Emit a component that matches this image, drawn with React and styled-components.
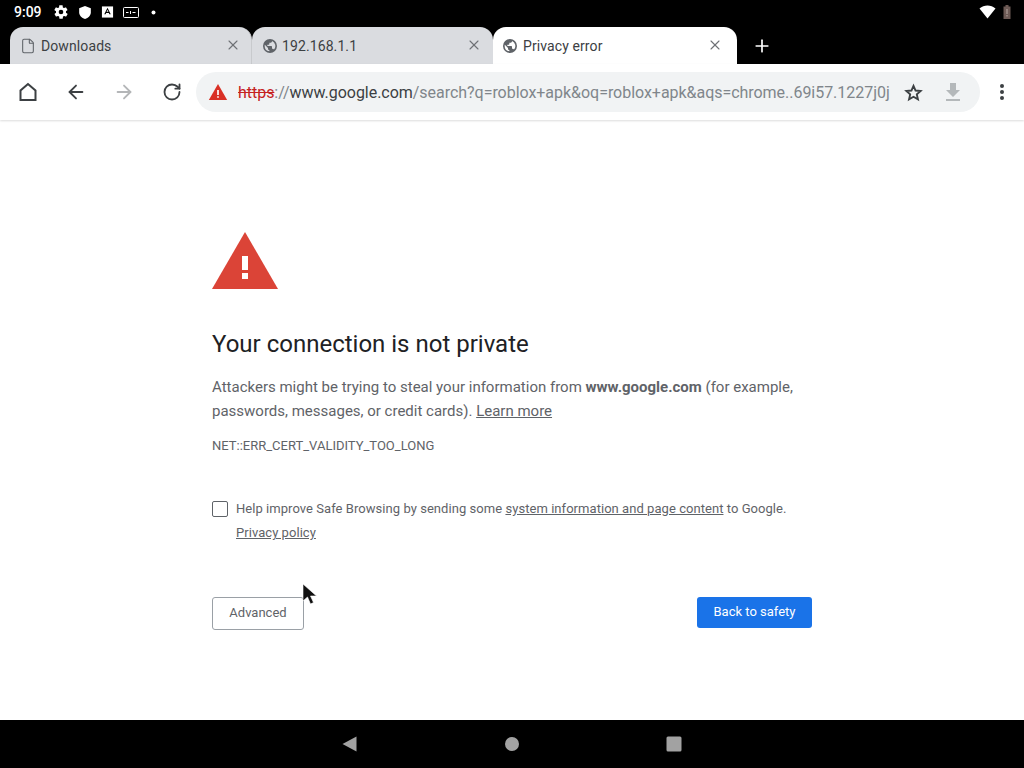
import React from 'react'
import styled, { createGlobalStyle } from 'styled-components'
import { ArrowLeft, ArrowRight, RotateCw, X, Plus, File } from 'lucide-react'

const GlobalStyle = createGlobalStyle`
  html, body { margin: 0; padding: 0; background: #000; }
  body { font-family: Roboto, "Liberation Sans", sans-serif; }
`

const Screen = styled.div`
  position: relative;
  width: 1024px;
  height: 768px;
  display: flex;
  flex-direction: column;
  overflow: hidden;
  background: #fff;
`
const StatusBar = styled.div`
  height: 27px;
  background: #000;
  color: #fff;
  display: flex;
  align-items: center;
  padding: 0 13px 3px 14px;
  box-sizing: border-box;
  font-size: 14px;
  font-weight: 500;
`
const StatusIcons = styled.div`
  display: flex;
  align-items: center;
  gap: 9px;
  margin-left: 11px;
  flex: 1;
`
const StatusDot = styled.svg`
  margin-left: 3px;
`
const Wifi = styled.svg`
  margin-right: 7px;
`
const TabStrip = styled.div`
  height: 37px;
  background: #000;
  display: flex;
  padding-left: 10px;
  align-items: stretch;
`
const Tab = styled.div`
  width: ${p => p.$width}px;
  box-sizing: border-box;
  background: ${p => (p.$active ? '#fff' : '#dadce0')};
  border-radius: 13px 13px 0 0;
  display: flex;
  align-items: center;
  padding: 0 ${p => p.$right}px 0 ${p => p.$left}px;
  gap: ${p => p.$gap}px;
  font-size: 14px;
  letter-spacing: 0.1px;
  color: #3c4043;
  border-right: ${p => (p.$divider ? '1px solid #c8cacd' : 'none')};
  span { flex: 1; white-space: nowrap; }
`
const TabClose = styled(X)`
  width: 16px;
  height: 16px;
  color: #6e7175;
  margin-top: -2px;
`
const GlobeIcon = styled.svg`
  flex: none;
`
const NewTab = styled.div`
  width: 50px;
  display: flex;
  align-items: center;
  justify-content: center;
  color: #fff;
`
const Toolbar = styled.div`
  height: 56px;
  background: #fff;
  display: flex;
  align-items: center;
  box-shadow: 0 1px 2px rgba(0, 0, 0, 0.14);
  position: relative;
  z-index: 1;
  box-sizing: border-box;
  padding-left: 16px;
`
const ToolButton = styled.div`
  width: 24px;
  height: 24px;
  margin-right: ${p => p.$gap}px;
  display: flex;
  align-items: center;
  justify-content: center;
  color: ${p => p.$color || '#3c4043'};
`
const Omnibox = styled.div`
  width: 784px;
  height: 40px;
  margin-left: 12px;
  border-radius: 20px;
  background: #f1f3f4;
  display: flex;
  align-items: center;
  padding: 0 18px 0 12px;
  box-sizing: border-box;
  font-size: 16px;
`
const Url = styled.div`
  flex: 1;
  min-width: 0;
  margin-left: 10px;
  white-space: nowrap;
  letter-spacing: -0.035px;
  color: #80868b;
`
const Scheme = styled.span`
  color: #c5221f;
  text-decoration: line-through;
`
const Host = styled.span`
  color: #3c4043;
`
const OmniIcon = styled.div`
  display: flex;
  flex: none;
  margin-left: ${p => p.$left}px;
`
const Menu = styled.div`
  margin-left: 10px;
  display: flex;
  flex-direction: column;
  gap: 2px;
  width: 24px;
  align-items: center;
  i { width: 4px; height: 4px; border-radius: 50%; background: #3c4043; }
`
const Page = styled.main`
  flex: 1;
  padding: 112px 0 0 212px;
  color: #5f6368;
  font-size: 15px;
`
const Content = styled.div`
  width: 600px;
`
const ErrorIcon = styled.svg`
  display: block;
`
const Title = styled.h1`
  margin: 39px 0 16px;
  font-size: 24px;
  font-weight: 400;
  line-height: 30px;
  color: #202124;
`
const Paragraph = styled.p`
  margin: 0;
  line-height: 24px;
  b { font-weight: 700; }
  a { color: #5f6368; text-decoration: underline; }
`
const ErrorCode = styled.div`
  margin-top: 15px;
  font-size: 13px;
  line-height: 16px;
  text-transform: uppercase;
`
const OptIn = styled.div`
  margin-top: 43px;
  display: flex;
  font-size: 13px;
  letter-spacing: 0.05px;
  line-height: 24px;
  a { color: #5f6368; text-decoration: underline; }
`
const Checkbox = styled.div`
  width: 14px;
  height: 14px;
  border: 1px solid #5f6368;
  border-radius: 2px;
  margin: 4px 8px 0 0;
  flex: none;
`
const Actions = styled.div`
  margin-top: 52px;
  display: flex;
  justify-content: space-between;
  align-items: flex-start;
`
const Button = styled.div`
  height: ${p => (p.$primary ? 31 : 33)}px;
  width: ${p => (p.$primary ? 115 : 92)}px;
  box-sizing: border-box;
  padding-bottom: 2px;
  border-radius: 3px;
  display: flex;
  align-items: center;
  justify-content: center;
  font-size: 13px;
  background: ${p => (p.$primary ? '#1a73e8' : '#fff')};
  color: ${p => (p.$primary ? '#fff' : '#5f6368')};
  border: ${p => (p.$primary ? 'none' : '1px solid #9aa0a6')};
`
const NavBar = styled.div`
  height: 48px;
  background: #000;
  display: flex;
  align-items: center;
  justify-content: center;
  gap: 146px;
`
const Cursor = styled.svg`
  position: absolute;
  left: 302px;
  top: 583px;
`

const Globe = () => (
  <GlobeIcon width="16" height="16" viewBox="0 0 24 24" fill="#5f6368">
    <path d="M12 1.5a10.5 10.5 0 1 0 0 21 10.5 10.5 0 0 0 0-21zM4 12c0-.7.1-1.300.3-1.900L9 15v1c0 1.100.9 2 2 2v2a8 8 0 0 1-7-8zm13.900 5.400c-.3-.8-1-1.400-1.900-1.400h-1v-3c0-.6-.4-1-1-1H8v-2h2c.6 0 1-.4 1-1V7h2c1.100 0 2-.9 2-2v-.4a8 8 0 0 1 2.900 12.800z" />
  </GlobeIcon>
)

export default function App () {
  return (
    <Screen>
      <GlobalStyle />
      <StatusBar>
        9:09
        <StatusIcons>
          <svg width="16" height="16" viewBox="0 0 24 24" fill="#fff">
            <path d="M19.400 13c.1-.3.100-.7.100-1s0-.7-.1-1l2.100-1.600c.2-.2.200-.4.100-.6l-2-3.500c-.1-.2-.4-.3-.6-.2l-2.500 1c-.5-.4-1.100-.7-1.700-1l-.4-2.700c0-.2-.2-.4-.5-.4h-4c-.3 0-.5.200-.5.400l-.4 2.700c-.6.300-1.200.6-1.700 1l-2.500-1c-.2-.1-.5 0-.6.200l-2 3.500c-.1.200-.1.400.1.600L4.600 11c-.1.300-.1.700-.1 1s0 .7.100 1l-2.100 1.600c-.2.200-.2.400-.1.600l2 3.500c.1.200.4.300.6.200l2.500-1c.5.400 1.100.7 1.700 1l.4 2.700c0 .2.200.4.500.4h4c.3 0 .5-.2.500-.4l.4-2.700c.6-.3 1.200-.6 1.700-1l2.500 1c.2.100.5 0 .6-.2l2-3.500c.1-.2.100-.4-.1-.6zM12 15.500a3.500 3.500 0 1 1 0-7 3.500 3.500 0 0 1 0 7z" />
          </svg>
          <svg width="14" height="15" viewBox="0 0 24 24" fill="#fff">
            <path d="M12 1 2 4.500v7c0 5.500 4.200 10.300 10 11.500 5.800-1.200 10-6 10-11.500v-7z" />
          </svg>
          <svg width="13" height="14" viewBox="0 0 14 14">
            <rect x="1" y="1" width="12" height="12" fill="#fff" />
            <path d="M3.500 9.500 7 2.500l3.500 7H9L8.500 8h-3L5 9.500zM6 6.800h2L7 4.500z" fill="#000" />
          </svg>
          <svg width="16" height="13" viewBox="0 0 16 13" fill="none" stroke="#fff">
            <rect x=".5" y="1.500" width="15" height="10" rx="1" />
            <path d="M3 6.500h2.500M7.500 5v3M9.500 6.500h3" />
          </svg>
          <StatusDot width="5" height="5" viewBox="0 0 5 5">
            <circle cx="2.500" cy="2.500" r="2" fill="#fff" />
          </StatusDot>
        </StatusIcons>
        <Wifi width="17" height="14" viewBox="0 0 17 14">
          <path d="M0.500 3.500C5 -0.500 12 -0.500 16.500 3.500L8.500 13.500z" fill="#fff" />
        </Wifi>
        <svg width="8" height="14" viewBox="0 0 8 14">
          <path d="M2.500 0h3v1.500H7.500V14H.5V1.500h2z" fill="#6d5a55" />
          <path d="M3.500 4h1v5h-1zM3.500 10h1v1.500h-1z" fill="#b9a9a4" />
        </svg>
      </StatusBar>
      <TabStrip>
        <Tab $width={242} $left={10} $right={10} $gap={5} $divider>
          <File size={16} strokeWidth={1.6} color="#5f6368" />
          <span>Downloads</span>
          <TabClose strokeWidth={1.6} />
        </Tab>
        <Tab $width={241} $left={10} $right={11} $gap={4}>
          <Globe />
          <span>192.168.1.1</span>
          <TabClose strokeWidth={1.6} />
        </Tab>
        <Tab $width={244} $left={9} $right={14} $gap={5} $active>
          <Globe />
          <span>Privacy error</span>
          <TabClose strokeWidth={1.6} />
        </Tab>
        <NewTab><Plus size={20} strokeWidth={2} /></NewTab>
      </TabStrip>
      <Toolbar>
        <ToolButton $gap={24}>
          <svg width="24" height="24" viewBox="0 0 24 24" fill="none" stroke="currentColor" strokeWidth="2">
            <path d="M12 4 4.500 10.500V20h15v-9.500z" />
          </svg>
        </ToolButton>
        <ToolButton $gap={24}><ArrowLeft size={22} strokeWidth={2} /></ToolButton>
        <ToolButton $gap={24} $color="#b4b6b8"><ArrowRight size={22} strokeWidth={2} /></ToolButton>
        <ToolButton $gap={0}><RotateCw size={20} strokeWidth={2.200} /></ToolButton>
        <Omnibox>
          <svg width="20" height="20" viewBox="0 0 24 24">
            <path d="M1 21.500 12 2.500l11 19z" fill="#d93025" />
            <path d="M11 9.500h2v6h-2zM11 17h2v2h-2z" fill="#fff" />
          </svg>
          <Url>
            <Scheme>https</Scheme>://<Host>www.google.com</Host>/search?q=roblox+apk&amp;oq=roblox+apk&amp;aqs=chrome..69i57.1227j0j
          </Url>
          <OmniIcon $left={14}>
            <svg width="19" height="19" viewBox="0 0 24 24" fill="none" stroke="#3c4043" strokeWidth="2.400" strokeLinejoin="miter">
              <path d="M12 3.500l2.600 6 6.400.6-4.800 4.300 1.400 6.300L12 17.400l-5.600 3.300 1.400-6.300L3 10.100l6.400-.6z" />
            </svg>
          </OmniIcon>
          <OmniIcon $left={21}>
            <svg width="18" height="20" viewBox="0 0 18 20" fill="#b4b8ba">
              <path d="M6 1h6v7h4l-7 7-7-7h4zM2 17h14v2H2z" />
            </svg>
          </OmniIcon>
        </Omnibox>
        <Menu><i /><i /><i /></Menu>
      </Toolbar>
      <Page>
        <Content>
          <ErrorIcon width="66" height="58" viewBox="0 0 66 58">
            <path d="M33 0 66 57H0z" fill="#db4437" />
            <path d="M30 24h6v14h-6zM30 41h6v6h-6z" fill="#fff" />
          </ErrorIcon>
          <Title>Your connection is not private</Title>
          <Paragraph>
            Attackers might be trying to steal your information from <b>www.google.com</b> (for example, passwords, messages, or credit cards). <a>Learn more</a>
          </Paragraph>
          <ErrorCode>net::ERR_CERT_VALIDITY_TOO_LONG</ErrorCode>
          <OptIn>
            <Checkbox />
            <div>
              Help improve Safe Browsing by sending some <a>system information and page content</a> to Google.<br />
              <a>Privacy policy</a>
            </div>
          </OptIn>
          <Actions>
            <Button>Advanced</Button>
            <Button $primary>Back to safety</Button>
          </Actions>
        </Content>
      </Page>
      <NavBar>
        <svg width="16" height="16" viewBox="0 0 16 16"><path d="M14.500 .5v15L.5 8z" fill="#a2a2a2" /></svg>
        <svg width="16" height="16" viewBox="0 0 16 16"><circle cx="8" cy="8" r="7" fill="#a2a2a2" /></svg>
        <svg width="16" height="16" viewBox="0 0 16 16"><rect x=".5" y=".5" width="15" height="15" rx="1.500" fill="#a2a2a2" /></svg>
      </NavBar>
      <Cursor width="16" height="24" viewBox="0 0 16 24">
        <path d="M1 1v17l4.500-4 3 7 3-1.500-3-6.500h6z" fill="#111" stroke="#fff" strokeWidth=".6" />
      </Cursor>
    </Screen>
  )
}
